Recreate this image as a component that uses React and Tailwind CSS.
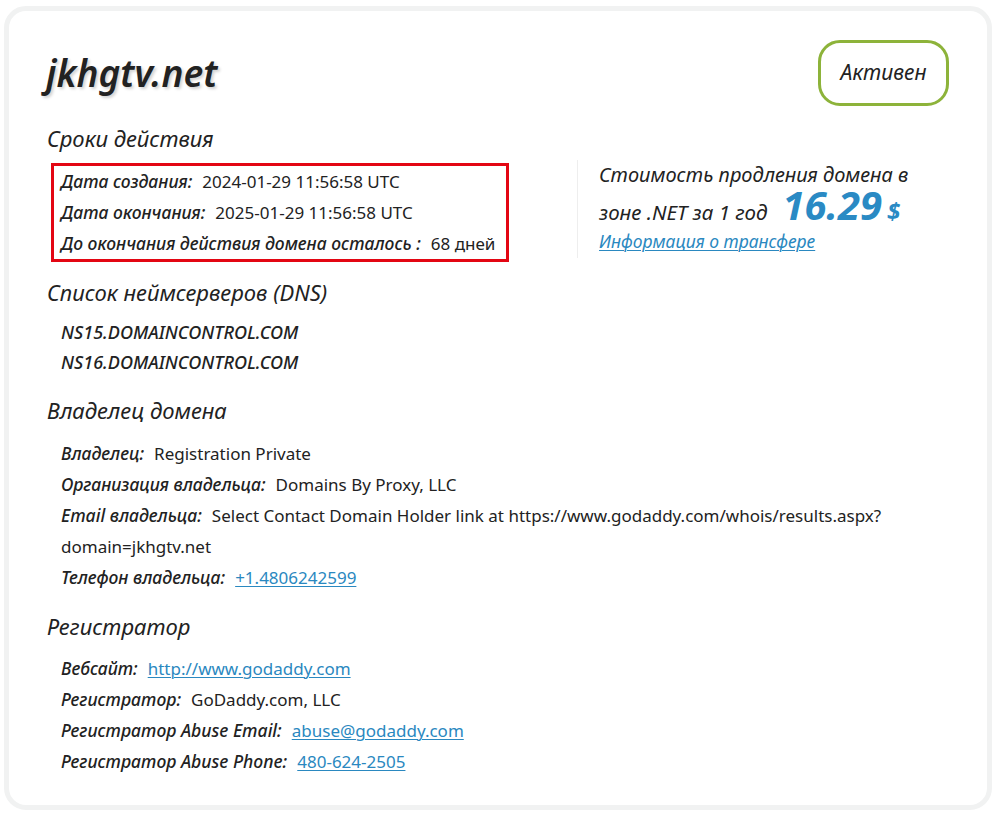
import React from "react";

const F = { fontFamily: '"Noto Sans", "Open Sans", sans-serif' };

function Row({ label, children }) {
  return (
    <div className="flex items-baseline h-[31px] leading-[31px] text-[17px] text-[#222] whitespace-nowrap">
      <span className="italic font-medium text-[17.5px] text-[#222]">{label}</span>
      <span className="ml-[10px]">{children}</span>
    </div>
  );
}

function Link({ children }) {
  return <a className="text-[#2a88c0] underline underline-offset-2 decoration-1">{children}</a>;
}

function H({ children, className = "" }) {
  return <h2 className={"italic text-[22px] leading-[28px] text-[#222] font-normal ml-[1px] " + className}>{children}</h2>;
}

export default function App() {
  return (
    <div className="w-[998px] h-[814px] bg-white p-[4px] pt-[6px]" style={F}>
      <div className="w-[988px] h-[804px] rounded-[22px] border-[5px] border-[#f1f2f2] bg-white pl-[37px] pr-[38px] pt-[30px]">
        <div className="flex items-start justify-between h-[65px]">
          <h1 className="italic font-semibold text-[37px] leading-[50px] text-[#222] mt-[7px] [text-shadow:2px_2px_3px_rgba(0,0,0,0.18)]">jkhgtv.net</h1>
          <div className="mt-[-1px] w-[131px] h-[66px] rounded-[22px] border-[3px] border-[#8db33a] flex items-center justify-center italic text-[21px] text-[#222]">
            Активен
          </div>
        </div>

        <H className="mt-[18px]">Сроки действия</H>

        <div className="flex items-start mt-[11px] ml-[5px]">
          <div className="w-[458px] h-[99px] border-[3px] border-[#e30613] pl-[7px]">
            <Row label="Дата создания:">2024-01-29 11:56:58 UTC</Row>
            <Row label="Дата окончания:">2025-01-29 11:56:58 UTC</Row>
            <Row label="До окончания действия домена осталось :">68 дней</Row>
          </div>
          <div className="ml-[68px] mt-[-3px] h-[98px] border-l border-[#eeeeee] pl-[21px]">
            <div className="italic text-[20px] h-[30px] leading-[30px] text-[#222] whitespace-nowrap">Стоимость продления домена в</div>
            <div className="italic text-[20.5px] h-[30px] leading-[30px] text-[#222] whitespace-nowrap">
              <span>зоне .NET за 1 год</span>
              <span className="ml-[15px] text-[40px] leading-[30px] font-bold text-[#2a8ac4]">16.29</span>
              <span className="ml-[5px] text-[24px] leading-[30px] font-bold text-[#2a8ac4]">$</span>
            </div>
            <div className="mt-[9px] italic text-[17.5px] leading-[24px]">
              <Link>Информация о трансфере</Link>
            </div>
          </div>
        </div>

        <H className="mt-[16px]">Список неймсерверов (DNS)</H>
        <div className="mt-[11px] ml-[15px] italic font-medium text-[18px] text-[#222]">
          <div className="h-[30px] leading-[30px]">NS15.DOMAINCONTROL.COM</div>
          <div className="h-[30px] leading-[30px]">NS16.DOMAINCONTROL.COM</div>
        </div>

        <H className="mt-[19px]">Владелец домена</H>
        <div className="mt-[14px] ml-[15px]">
          <Row label="Владелец:">Registration Private</Row>
          <Row label="Организация владельца:">Domains By Proxy, LLC</Row>
          <div className="text-[17px] leading-[31px] text-[#222]">
            <span className="italic font-medium text-[17.5px]">Email владельца:</span>
            <span className="ml-[10px]">Select Contact Domain Holder link at https://www.godaddy.com/whois/results.aspx?</span>
            <br />
            domain=jkhgtv.net
          </div>
          <Row label="Телефон владельца:"><Link>+1.4806242599</Link></Row>
        </div>

        <H className="mt-[19px]">Регистратор</H>
        <div className="mt-[13px] ml-[15px]">
          <Row label="Вебсайт:"><Link>http://www.godaddy.com</Link></Row>
          <Row label="Регистратор:">GoDaddy.com, LLC</Row>
          <Row label="Регистратор Abuse Email:"><Link>abuse@godaddy.com</Link></Row>
          <Row label="Регистратор Abuse Phone:"><Link>480-624-2505</Link></Row>
        </div>
      </div>
    </div>
  );
}
